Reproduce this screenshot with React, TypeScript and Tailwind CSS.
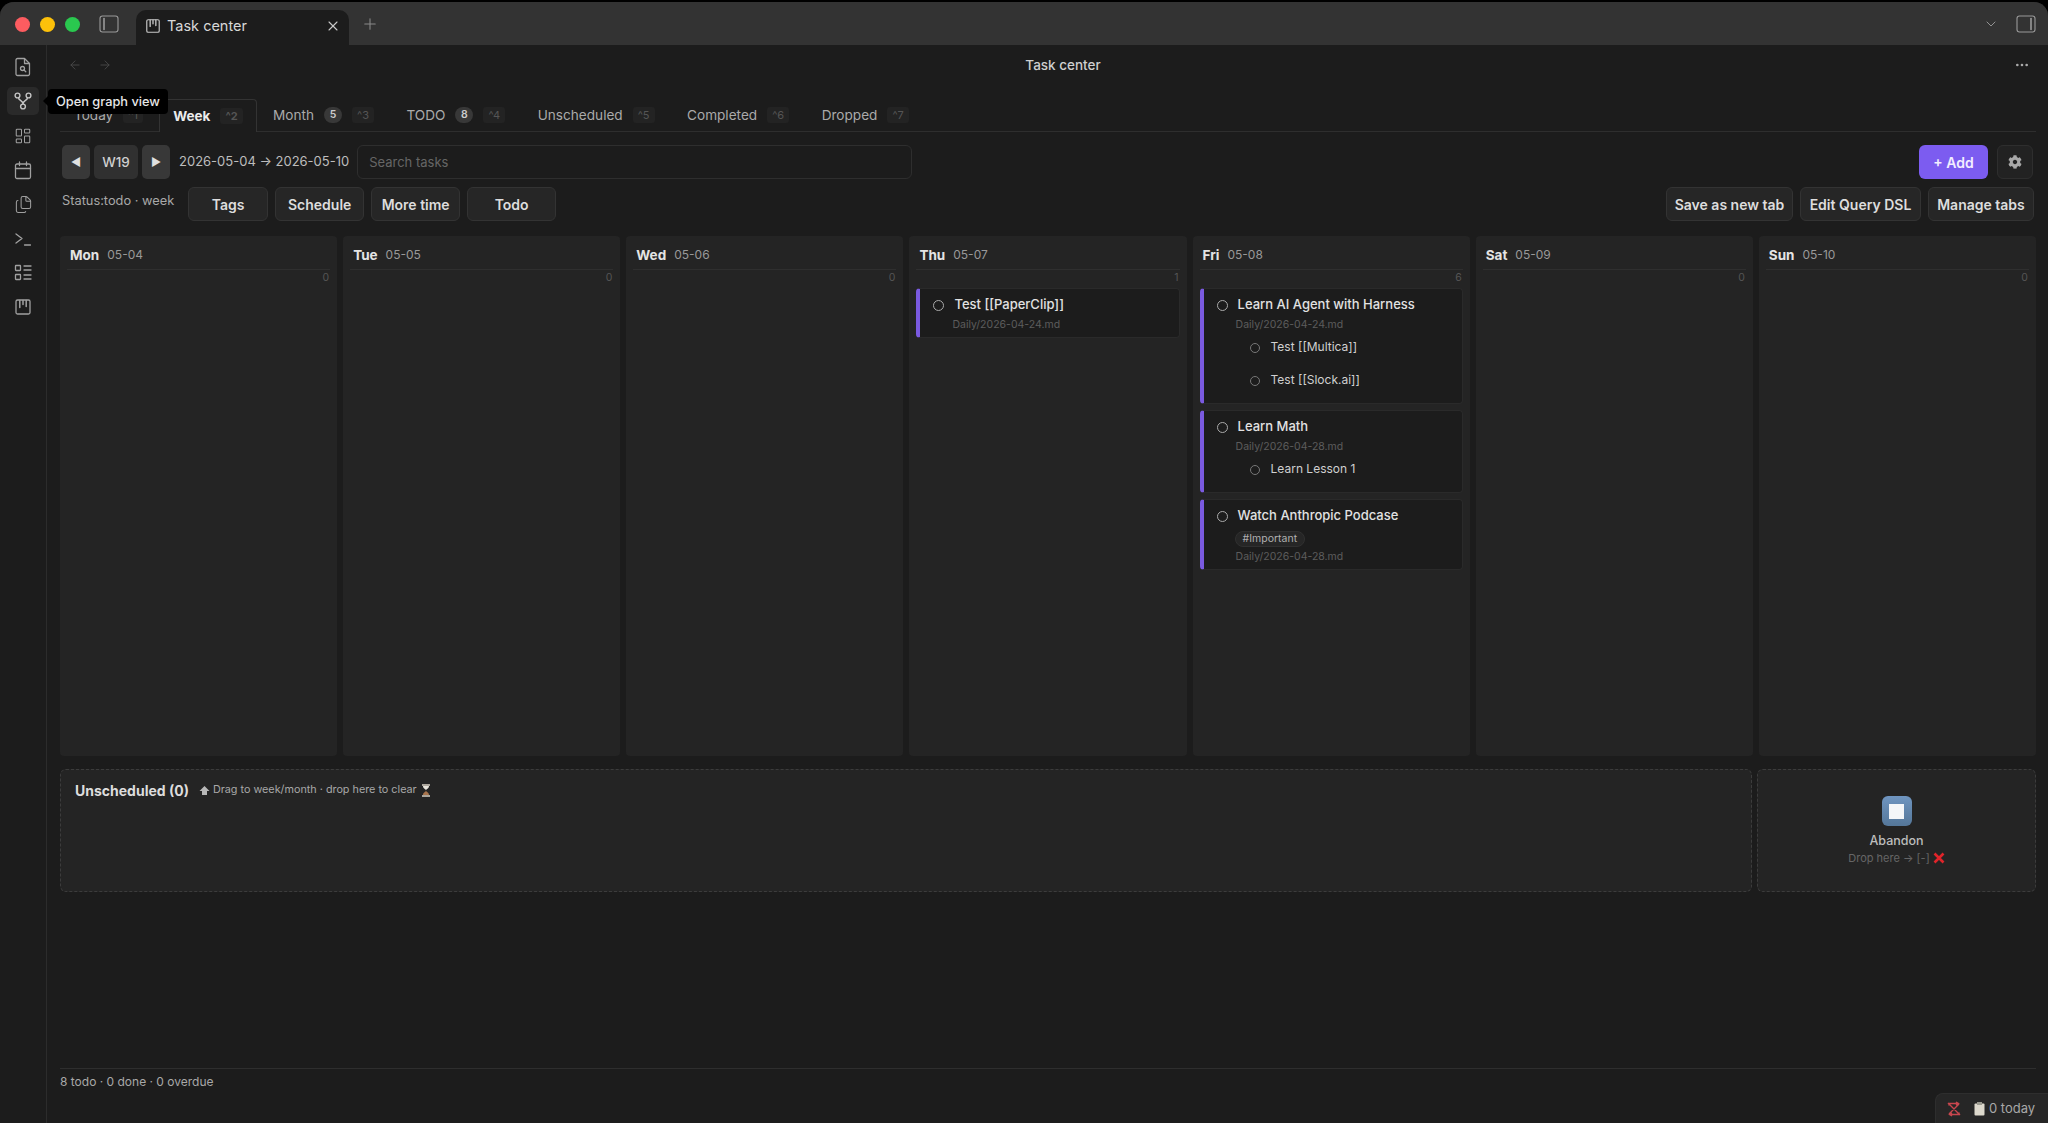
import { ArrowLeft, ArrowRight, ChevronDown, Ellipsis, Files, LayoutDashboard, Plus, X } from 'lucide-react';
import { FaCog } from 'react-icons/fa';
import type { ReactNode } from 'react';

const FONT = "font-['Inter','Liberation_Sans',sans-serif]";

function KanbanIcon({ size = 18 }: { size?: number }) {
  return (
    <svg width={size} height={size} viewBox="0 0 18 18" fill="none" stroke="currentColor" strokeWidth="1.3" strokeLinecap="round">
      <rect x="2" y="2" width="14" height="14" rx="1.5" />
      <path d="M5.8 2.5v7M9 2.5v4M12.2 2.5v6" strokeWidth="1.5" />
    </svg>
  );
}

function PanelIcon({ side }: { side: 'left' | 'right' }) {
  return (
    <svg width="20" height="18" viewBox="0 0 20 18" fill="none" stroke="currentColor" strokeWidth="1.1" strokeLinecap="round">
      <rect x="1" y="1" width="18" height="16" rx="2.5" />
      {side === 'left' ? <path d="M5 3.5v11" strokeWidth="1.6" /> : <path d="M15 3.5v11" strokeWidth="1.6" />}
    </svg>
  );
}

// left ribbon icons, drawn because the package ones are off by a few strokes
const ribbon: ReactNode[] = [
  <svg key="a" width="18" height="20" viewBox="0 0 18 20" fill="none" stroke="currentColor" strokeWidth="1.3" strokeLinejoin="round">
    <path d="M3.5 1.5h7l5 5v10.5a1.5 1.5 0 0 1-1.5 1.5h-10.5a1.5 1.5 0 0 1-1.5-1.5v-14a1.5 1.5 0 0 1 1.5-1.5z" />
    <path d="M10.5 1.5v5h5" />
    <circle cx="8.5" cy="11.5" r="2" />
    <path d="M10 13l1.8 1.8" strokeLinecap="round" />
  </svg>,
  <svg key="b" width="18" height="18" viewBox="0 0 18 18" fill="none" stroke="currentColor" strokeWidth="1.4">
    <circle cx="3.5" cy="3.5" r="2.4" />
    <circle cx="14.5" cy="3.5" r="2.4" />
    <circle cx="9" cy="14.5" r="2.4" />
    <path d="M4.5 6c.5 2.5 4.5 2.5 4.5 6M13.5 6c-.5 2.5-4.5 2.5-4.5 6" />
  </svg>,
  <LayoutDashboard key="c" size={18} strokeWidth={1.4} />,
  <svg key="d" width="18" height="19" viewBox="0 0 18 19" fill="none" stroke="currentColor" strokeWidth="1.3" strokeLinecap="round">
    <rect x="1.5" y="3" width="15" height="14.5" rx="1.5" />
    <path d="M1.5 7.5h15M5.5 1v3.5M12.5 1v3.5" />
  </svg>,
  <Files key="e" size={19} strokeWidth={1.3} />,
  <svg key="f" width="18" height="16" viewBox="0 0 18 16" fill="none" stroke="currentColor" strokeWidth="1.3" strokeLinecap="round" strokeLinejoin="round">
    <path d="M2 3l6 4.5-6 4.5M10.5 14h6" />
  </svg>,
  <svg key="g" width="18" height="17" viewBox="0 0 18 17" fill="none" stroke="currentColor" strokeWidth="1.3" strokeLinecap="round">
    <rect x="1.5" y="1.5" width="5" height="5" rx="0.5" />
    <rect x="1.5" y="10.5" width="5" height="5" rx="0.5" />
    <path d="M10 2h7M10 6h7M10 11h7M10 15h7" />
  </svg>,
  <KanbanIcon key="h" />,
];

const tabs = [
  { name: 'Today', key: '^1' },
  { name: 'Week', key: '^2', active: true },
  { name: 'Month', count: 5, key: '^3' },
  { name: 'TODO', count: 8, key: '^4' },
  { name: 'Unscheduled', key: '^5' },
  { name: 'Completed', key: '^6' },
  { name: 'Dropped', key: '^7' },
];

function Tab({ name, count, shortcut, active }: { name: string; count?: number; shortcut: string; active?: boolean }) {
  return (
    <div
      className={
        active
          ? 'flex h-[33px] items-center gap-[10px] rounded-t-[4px] border border-b-0 border-[#333333] bg-[#1c1c1c] px-[13px] text-[13.5px] font-bold text-[#ececec] -mb-px'
          : 'flex h-[32px] items-center gap-[10px] px-[16.25px] text-[13.6px] text-[#aaaaaa]'
      }
    >
      <span>{name}</span>
      {count !== undefined && (
        <span className="flex h-[16px] w-[18px] items-center justify-center rounded-full bg-[#383838] text-[10.5px] font-semibold text-[#cccccc]">
          {count}
        </span>
      )}
      <span className="rounded-[3px] bg-[#232323] px-[5px] text-[11px] text-[#555555]">{shortcut}</span>
    </div>
  );
}

function PagerButton({ children, wide }: { children: ReactNode; wide?: boolean }) {
  return (
    <button
      className={
        wide
          ? 'flex h-[34px] w-[44px] items-center justify-center rounded-[5px] bg-[#303030] text-[13.5px] font-medium text-[#cfcfcf]'
          : 'flex h-[34px] w-[28px] items-center justify-center rounded-[5px] bg-[#383838] text-[11px] text-[#e0e0e0]'
      }
    >
      {children}
    </button>
  );
}

function ToolButton({ label, className }: { label: string; className?: string }) {
  return (
    <button className={`flex h-[34px] items-center justify-center rounded-[6px] border border-[#333333] bg-[#262626] text-[14px] font-semibold text-[#dddddd] ${className ?? ''}`}>
      {label}
    </button>
  );
}

function Circle({ sub }: { sub?: boolean }) {
  return (
    <span
      className={
        sub
          ? 'h-[10px] w-[10px] shrink-0 rounded-full border border-[#777777]'
          : 'h-[11px] w-[11px] shrink-0 rounded-full border-[1.5px] border-[#aaaaaa]'
      }
    />
  );
}

type Task = { title: string; file: string; tag?: string; subs?: string[] };

function TaskCard({ task }: { task: Task }) {
  return (
    <div className="flex flex-col rounded-[4px] border border-[#2a2a2a] border-l-4 border-l-[#7a5ae0] bg-[#1c1c1c] pb-[5px] pl-[13px] pt-[7px]">
      <div className="flex h-[18px] items-center gap-[10px]">
        <Circle />
        <span className="text-[13px] font-medium text-[#e2e2e2]">{task.title}</span>
      </div>
      {task.tag && (
        <span className="ml-[18px] mt-[6px] w-fit rounded-full border border-[#303030] bg-[#262626] px-[7px] text-[10.5px] leading-[14px] text-[#b0b0b0]">
          {task.tag}
        </span>
      )}
      <div className={`ml-[19px] text-[10.5px] leading-[14px] text-[#5c5c5c] ${task.tag ? 'mt-[3px]' : 'mt-[4px]'}`}>{task.file}</div>
      {task.subs && (
        <div className="-mt-[1px] flex flex-col pb-[1px]">
          {task.subs.map((sub) => (
            <div key={sub} className="flex h-[33px] items-center gap-[11px] pl-[33px]">
              <Circle sub />
              <span className="-mt-[2px] text-[12px] text-[#d0d0d0]">{sub}</span>
            </div>
          ))}
        </div>
      )}
    </div>
  );
}

const days: { name: string; date: string; tasks: Task[] }[] = [
  { name: 'Mon', date: '05-04', tasks: [] },
  { name: 'Tue', date: '05-05', tasks: [] },
  { name: 'Wed', date: '05-06', tasks: [] },
  { name: 'Thu', date: '05-07', tasks: [{ title: 'Test [[PaperClip]]', file: 'Daily/2026-04-24.md' }] },
  {
    name: 'Fri',
    date: '05-08',
    tasks: [
      { title: 'Learn AI Agent with Harness', file: 'Daily/2026-04-24.md', subs: ['Test [[Multica]]', 'Test [[Slock.ai]]'] },
      { title: 'Learn Math', file: 'Daily/2026-04-28.md', subs: ['Learn Lesson 1'] },
      { title: 'Watch Anthropic Podcase', file: 'Daily/2026-04-28.md', tag: '#Important' },
    ],
  },
  { name: 'Sat', date: '05-09', tasks: [] },
  { name: 'Sun', date: '05-10', tasks: [] },
];

function DayColumn({ name, date, tasks }: { name: string; date: string; tasks: Task[] }) {
  const count = name === 'Fri' ? 6 : tasks.length;
  return (
    <div className="flex h-[520px] flex-col rounded-[4px] bg-[#242424] px-[7px]">
      <div className="flex h-[34px] shrink-0 items-center gap-[8px] border-b border-[#2f2f2f] pl-[3px] pt-[5px]">
        <span className="text-[13.5px] font-bold text-[#e4e4e4]">{name}</span>
        <span className="text-[12px] text-[#999999]">{date}</span>
      </div>
      <div className="h-[18px] shrink-0 pr-[1px] text-right text-[10.5px] leading-[16px] text-[#555555]">{count}</div>
      <div className="flex flex-col gap-[6px]">
        {tasks.map((task) => (
          <TaskCard key={task.title} task={task} />
        ))}
      </div>
    </div>
  );
}

export default function App() {
  return (
    <div className={`h-[1123px] w-[2048px] overflow-hidden bg-black pt-[2px] ${FONT}`}>
      <div className="relative flex h-[1121px] flex-col overflow-hidden rounded-t-[14px] bg-[#1c1c1c]">
        {/* title bar */}
        <div className="flex h-[43px] shrink-0 items-end bg-[#333333]">
          <div className="mb-[13px] ml-[15px] flex items-center gap-[10px]">
            <span className="h-[15px] w-[15px] rounded-full bg-[#fc5c60]" />
            <span className="h-[15px] w-[15px] rounded-full bg-[#fdc10a]" />
            <span className="h-[15px] w-[15px] rounded-full bg-[#2ac84f]" />
          </div>
          <div className="mb-[12px] ml-[19px] text-[#9a9a9a]">
            <PanelIcon side="left" />
          </div>
          <div className="ml-[17px] flex h-[35px] w-[213px] items-center rounded-t-[10px] bg-[#1c1c1c] pb-[3px] pl-[9px] pr-[8px] text-[#c8c8c8]">
            <KanbanIcon size={16} />
            <span className="ml-[6px] flex-1 text-[14.5px] text-[#d8d8d8]">Task center</span>
            <X size={16} strokeWidth={1.6} />
          </div>
          <div className="mb-[12px] ml-[12px] text-[#8a8a8a]">
            <Plus size={18} strokeWidth={1.4} />
          </div>
          <div className="mb-[12px] ml-auto mr-[12px] flex items-center gap-[17px] text-[#9a9a9a]">
            <ChevronDown size={16} strokeWidth={1.4} />
            <PanelIcon side="right" />
          </div>
        </div>

        <div className="flex min-h-0 flex-1">
          {/* ribbon */}
          <div className="flex w-[47px] shrink-0 flex-col items-center border-r border-[#2c2c2c] pt-[5px] text-[#a0a0a0]">
            {ribbon.map((icon, i) => (
              <div key={i} className="flex h-[34.3px] w-[32px] items-center justify-center">
                <div className={`flex h-[28px] w-[32px] items-center justify-center rounded-[5px] ${i === 1 ? 'bg-[#2a2a2a] text-[#c4c4c4]' : ''}`}>
                  {icon}
                </div>
              </div>
            ))}
          </div>

          {/* main */}
          <div className="flex min-w-0 flex-1 flex-col pl-[13px] pr-[12px]">
            <div className="relative flex h-[40px] shrink-0 items-center pl-[8px] text-[#4c4c4c]">
              <ArrowLeft size={14} strokeWidth={1.5} />
              <ArrowRight size={14} strokeWidth={1.5} className="ml-[16px]" />
              <span className="flex-1 text-center text-[13.5px] font-medium text-[#cfcfcf]">Task center</span>
              <Ellipsis size={16} strokeWidth={2} className="mr-[6px] text-[#aaaaaa]" />
            </div>

            {/* tabs */}
            <div className="mt-[15px] flex h-[32px] shrink-0 items-end border-b border-[#2e2e2e]">
              <div className="-ml-[2.25px] flex items-end">
                {tabs.map((tab) => (
                  <Tab key={tab.name} name={tab.name} count={tab.count} shortcut={tab.key} active={tab.active} />
                ))}
              </div>
            </div>

            {/* toolbar */}
            <div className="mt-[13px] flex h-[34px] shrink-0 items-center pl-[2px] pr-[3px]">
              <div className="flex gap-[4px]">
                <PagerButton>◀</PagerButton>
                <PagerButton wide>W19</PagerButton>
                <PagerButton>▶</PagerButton>
              </div>
              <span className="ml-[9px] text-[13px] text-[#bdbdbd]">2026-05-04 → 2026-05-10</span>
              <div className="ml-[8px] flex h-[34px] w-[555px] items-center rounded-[6px] border border-[#2e2e2e] px-[11px] pt-[1px] text-[13px] text-[#666666]">
                Search tasks
              </div>
              <button className="ml-auto flex h-[34px] w-[69px] items-center justify-center rounded-[6px] bg-[#7c5cf0] text-[14px] font-semibold text-[#f2eeff]">
                + Add
              </button>
              <button className="ml-[9px] flex h-[34px] w-[36px] items-center justify-center rounded-[6px] border border-[#2e2e2e] bg-[#222222] text-[#a8a8a8]">
                <FaCog size={14} />
              </button>
            </div>

            <div className="mt-[8px] flex h-[34px] shrink-0 items-center pl-[2px] pr-[2px]">
              <span className="-mt-[6px] mr-[14px] text-[12.8px] text-[#a8a8a8]">Status:todo · week</span>
              <div className="flex gap-[7px]">
                <ToolButton label="Tags" className="w-[80px]" />
                <ToolButton label="Schedule" className="w-[89px]" />
                <ToolButton label="More time" className="w-[89px]" />
                <ToolButton label="Todo" className="w-[89px]" />
              </div>
              <div className="ml-auto flex gap-[7px]">
                <ToolButton label="Save as new tab" className="w-[127px]" />
                <ToolButton label="Edit Query DSL" className="w-[121px]" />
                <ToolButton label="Manage tabs" className="w-[106px]" />
              </div>
            </div>

            {/* week */}
            <div className="mt-[15px] grid shrink-0 grid-cols-7 gap-[6px]">
              {days.map((day) => (
                <DayColumn key={day.name} name={day.name} date={day.date} tasks={day.tasks} />
              ))}
            </div>

            {/* drop zones */}
            <div className="mt-[13px] flex h-[123px] shrink-0 gap-[5px]">
              <div className="flex-1 rounded-[6px] border border-dashed border-[#3c3c3c] bg-[#242424] px-[14px] pt-[10px]">
                <div className="flex items-center">
                  <span className="text-[14px] font-bold text-[#dddddd]">Unscheduled (0)</span>
                  <span className="ml-[10px] flex items-center gap-[3px] text-[10.8px] text-[#a8a8a8]">
                    <svg width="11" height="11" viewBox="0 0 11 11" fill="#b8b8b8">
                      <path d="M5.5 1L10.5 6H8V10H3V6H0.5z" />
                    </svg>
                    Drag to week/month · drop here to clear
                    <svg width="10" height="13" viewBox="0 0 10 13" className="ml-[1px]">
                      <path d="M1 1h8M1 12h8" stroke="#d8d0c4" strokeWidth="1.4" />
                      <path d="M2 2c0 3 3 3 3 4.5C5 5 8 5 8 2z" fill="#e8e4dc" />
                      <path d="M2 11c0-3 3-3 3-4.5C5 8 8 8 8 11z" fill="#a8744c" />
                    </svg>
                  </span>
                </div>
              </div>
              <div className="flex w-[279px] flex-col items-center rounded-[6px] border border-dashed border-[#3c3c3c] bg-[#242424] pt-[26px]">
                <div className="flex h-[30px] w-[30px] items-center justify-center rounded-[6px] bg-linear-to-b from-[#6f95c0] to-[#557799]">
                  <span className="h-[15px] w-[15px] bg-[#f4f6f8]" />
                </div>
                <span className="mt-[7px] text-[12.5px] font-medium leading-[16px] text-[#bdbdbd]">Abandon</span>
                <span className="mt-[2px] flex items-center gap-[3px] text-[11px] leading-[14px] text-[#666666]">
                  Drop here → [-]
                  <svg width="12" height="12" viewBox="0 0 12 12">
                    <path d="M1.5 1.5L10.5 10.5M10.5 1.5L1.5 10.5" stroke="#e0242a" strokeWidth="2.6" />
                  </svg>
                </span>
              </div>
            </div>

            {/* footer */}
            <div className="mt-auto flex h-[55px] shrink-0 border-t border-[#2e2e2e] pt-[4px] text-[12px] text-[#a8a8a8]">
              8 todo · 0 done · 0 overdue
            </div>
          </div>
        </div>

        {/* status bar */}
        <div className="absolute bottom-0 right-0 flex h-[30px] w-[113px] items-center rounded-tl-[8px] border-l border-t border-[#2e2e2e] bg-[#262626] pl-[10px] pt-[1px] text-[13px] text-[#a8a8a8]">
          <svg width="16" height="16" viewBox="0 0 16 16" fill="none" stroke="#c8464e" strokeWidth="1.4">
            <path d="M2 2l12 12M3 4.5V2.5h9M13 11.5v2H4M13 3L3 13M10 1l2.5 1.5L10 4M6 12L3.5 13.5 6 15" />
          </svg>
          <svg width="11" height="14" viewBox="0 0 11 14" className="ml-[12px]">
            <rect x="0.5" y="1.5" width="10" height="12" rx="1" fill="#dcd8cc" />
            <rect x="3" y="0" width="5" height="3" fill="#9a9a90" />
          </svg>
          <span className="ml-[4px]">0 today</span>
        </div>

        {/* tooltip */}
        <div className="absolute left-[48px] top-[87px] flex h-[25px] items-center rounded-[4px] bg-black px-[8px] text-[12.8px] font-medium text-[#e8e8e8]">
          <span className="absolute -left-[5px] top-[7px] h-0 w-0 border-y-[5px] border-r-[5px] border-y-transparent border-r-black" />
          Open graph view
        </div>
      </div>
    </div>
  );
}
